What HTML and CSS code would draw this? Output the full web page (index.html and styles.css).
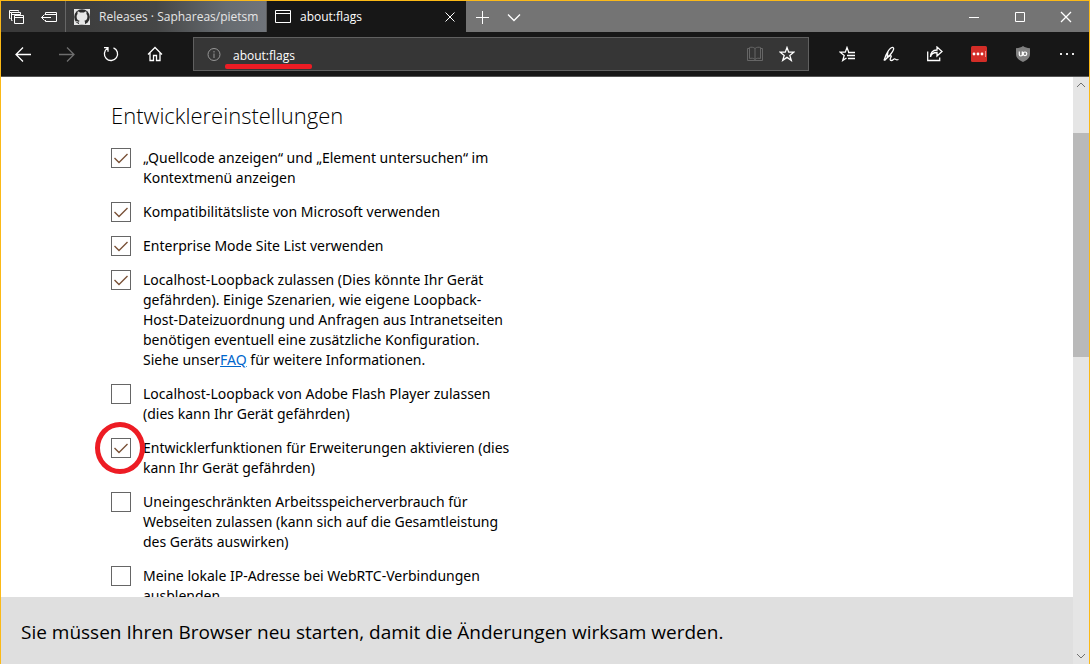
FILE: index.html
```html
<!DOCTYPE html>
<html lang="de">
<head>
<meta charset="utf-8">
<meta name="viewport" content="width=device-width, initial-scale=1">
<title>about:flags</title>
<link rel="stylesheet" href="styles.css">
</head>
<body>
<div class="window">
  <header class="tabstrip">
    <div class="tab-actions">
      <button class="strip-button" aria-label="Beiseitegelegte Tabs"><svg class="icon" viewBox="0 0 16 16"><path d="M5.500 6.500h9v8h-9zM5.500 8.500h9M3.500 11.500h-1v-8h9v2M2.500 5.500h9M1.500 9.500h-1v-8h9v1M.5 3.500h2"/></svg></button>
      <button class="strip-button" aria-label="Tabs beiseitelegen"><svg class="icon" viewBox="0 0 16 16"><path d="M4.500 6V3.500h11v9h-11V11M4.500 5.500h11M.5 8.500H10M3.500 5.500l-3 3 3 3"/></svg></button>
    </div>
    <div class="tab tab-idle">
      <svg class="icon" viewBox="0 0 16 16"><path class="fill-light" d="M0 0h16v16H0z"/><circle class="fill-dark" cx="8" cy="8" r="7.800"/><path class="fill-light" d="M5 15.500v-2c-2 .4-2.400-.9-3.200-1.400 1.500-.4 1.700 1 3.200.6.1-.5.300-.8.600-1C3.600 11.400 2.600 10 2.600 7.500c0-1 .4-1.900 1-2.500-.2-.7-.2-1.600.1-2.500 1 0 1.900.6 2.500 1h3.600c.6-.4 1.500-1 2.500-1 .3.900.3 1.800.1 2.500.6.600 1 1.500 1 2.500 0 2.500-1 3.900-3 4.200.4.400.6.900.6 1.700v2.400z"/></svg>
      <span class="tab-title">Releases · Saphareas/pietsmiet</span>
    </div>
    <div class="tab tab-active">
      <svg class="icon" viewBox="0 0 16 16"><path d="M.5 1.500h15v12H.5zM.5 4.500h15"/></svg>
      <span class="tab-title">about:flags</span>
      <button class="tab-close" aria-label="Tab schließen"><svg class="icon" viewBox="0 0 16 16"><path d="M3.500 3.500l9 9M12.500 3.500l-9 9"/></svg></button>
    </div>
    <button class="strip-button" aria-label="Neuer Tab"><svg class="icon" viewBox="0 0 16 16"><path d="M8.500 2v13M2 8.500h13"/></svg></button>
    <button class="strip-button" aria-label="Tabvorschau"><svg class="icon icon-bold" viewBox="0 0 16 16"><path d="M2 5.500l6 6 6-6"/></svg></button>
    <div class="window-controls">
      <button class="window-button" aria-label="Minimieren"><svg class="icon" viewBox="0 0 16 16"><path d="M3 8.500h10"/></svg></button>
      <button class="window-button" aria-label="Maximieren"><svg class="icon" viewBox="0 0 16 16"><path d="M3.500 3.500h9v9h-9z"/></svg></button>
      <button class="window-button" aria-label="Schließen"><svg class="icon icon-bold" viewBox="0 0 16 16"><path d="M3 3l10 10M13 3L3 13"/></svg></button>
    </div>
  </header>

  <nav class="toolbar">
    <button class="tool" aria-label="Zurück"><svg class="icon icon-bold" viewBox="0 0 16 16"><path d="M1 8.500h15M8 1.500l-7 7 7 7"/></svg></button>
    <button class="tool" aria-label="Vorwärts" disabled><svg class="icon icon-bold" viewBox="0 0 16 16"><path d="M0 8.500h15M8 1.500l7 7-7 7"/></svg></button>
    <button class="tool" aria-label="Aktualisieren"><svg class="icon icon-bold" viewBox="0 0 16 16"><path d="M4.500 2.300A6.600 6.600 0 1 0 10.500 1.800M1 1.700h4v4"/></svg></button>
    <button class="tool" aria-label="Startseite"><svg class="icon icon-bold" viewBox="0 0 16 16"><path d="M1 8.500l7-7 7 7M3 7v7.500h3.500v-5h3v5H13V7"/></svg></button>
    <div class="address">
      <svg class="icon icon-muted" viewBox="0 0 16 16"><circle cx="8" cy="8.500" r="6"/><path d="M8 7.500V12M8 5v1.500"/></svg>
      <input class="address-input" type="text" value="about:flags" aria-label="Adresse">
      <svg class="icon icon-dim" viewBox="0 0 16 16"><path d="M8 2.500C6.500 1 4 1 2.500 1.500v11c2-.5 4-.5 5.500 1 1.500-1.500 3.500-1.500 5.500-1v-11C12 1 9.500 1 8 2.500zM8 2.500v11M2.500 2.500h-2v12h15v-12h-2"/></svg>
      <button class="address-star" aria-label="Zu Favoriten hinzufügen"><svg class="icon icon-bold" viewBox="0 0 16 16"><path d="M8 1.500l1.700 4.700h5.100l-4 3.200 1.500 5L8 11.400l-4.300 3 1.500-5-4-3.200h5.100z"/></svg></button>
      <span class="underline-mark"></span>
    </div>
    <button class="tool" aria-label="Hub"><svg class="icon icon-bold" viewBox="0 0 16 16"><path d="M10 6.200H9.700L8 1.500 6.300 6.200H1.200l4 3.200-1.500 5L7.500 12M9 6.500h7M8 9.500h8M9 12.500h7"/></svg></button>
    <button class="tool" aria-label="Notizen hinzufügen"><svg class="icon icon-bold" viewBox="0 0 16 16"><path d="M1 14.500L3 9C5 5 8 1 10 1.500c2 1-1 5-3 7.500l-5.500 5.500L4 12c3-3 5-3 4-1s-1.500 3.500.5 3.500c1.500 0 2-2 3.500-1.500s1 1.500 3.500.5M3 9l3.500 1M5 5.500L4 12"/></svg></button>
    <button class="tool" aria-label="Teilen"><svg class="icon icon-bold" viewBox="0 0 16 16"><path d="M.7 5.500v9h12v-3M3.500 11c.5-3.500 3-4.500 6.500-4.500V10l5-4.500-5-4.500v3C5.500 4 3.500 6.500 3.500 11z"/></svg></button>
    <button class="tool" aria-label="LastPass"><svg class="icon" viewBox="0 0 16 16"><rect class="fill-red" width="16" height="16" rx="1.500"/><circle class="fill-white" cx="3" cy="8" r="1.400"/><circle class="fill-white" cx="7" cy="8" r="1.400"/><circle class="fill-white" cx="11" cy="8" r="1.400"/><path class="stroke-pink" d="M14.500 5v6"/></svg></button>
    <button class="tool" aria-label="uBlock Origin"><svg class="icon" viewBox="0 0 16 16"><path class="fill-shield" d="M8 0c2 1.500 4 2 7 2.200V8c0 4-3 6-7 8-4-2-7-4-7-8V2.200C4 2 6 1.500 8 0z"/><path class="shield-mark" d="M4.300 5.500v3a1.500 1.500 0 0 0 3 0v-3M7.500 5.500v4.300"/><circle class="shield-mark" cx="10" cy="7.800" r="1.800"/></svg></button>
    <button class="tool" aria-label="Mehr"><svg class="icon" viewBox="0 0 16 16"><path class="fill-light" d="M1 7h2v2H1zM7 7h2v2H7zM13 7h2v2h-2z"/></svg></button>
  </nav>

  <div class="viewport">
    <div class="page">
      <main class="content">
        <h1 class="heading">Entwicklereinstellungen</h1>
        <ul class="flags">
          <li class="flag"><input class="check" type="checkbox" id="f1" checked><label for="f1">„Quellcode anzeigen“ und „Element untersuchen“ im<br>Kontextmenü anzeigen</label></li>
          <li class="flag"><input class="check" type="checkbox" id="f2" checked><label for="f2">Kompatibilitätsliste von Microsoft verwenden</label></li>
          <li class="flag"><input class="check" type="checkbox" id="f3" checked><label for="f3">Enterprise Mode Site List verwenden</label></li>
          <li class="flag"><input class="check" type="checkbox" id="f4" checked><label for="f4">Localhost-Loopback zulassen (Dies könnte Ihr Gerät<br>gefährden). Einige Szenarien, wie eigene Loopback-<br>Host-Dateizuordnung und Anfragen aus Intranetseiten<br>benötigen eventuell eine zusätzliche Konfiguration.<br>Siehe unser<a class="link" href="#faq">FAQ</a> für weitere Informationen.</label></li>
          <li class="flag"><input class="check" type="checkbox" id="f5"><label for="f5">Localhost-Loopback von Adobe Flash Player zulassen<br>(dies kann Ihr Gerät gefährden)</label></li>
          <li class="flag"><input class="check" type="checkbox" id="f6" checked><label for="f6">Entwicklerfunktionen für Erweiterungen aktivieren (dies<br>kann Ihr Gerät gefährden)</label><span class="circle-mark"></span></li>
          <li class="flag"><input class="check" type="checkbox" id="f7"><label for="f7">Uneingeschränkten Arbeitsspeicherverbrauch für<br>Webseiten zulassen (kann sich auf die Gesamtleistung<br>des Geräts auswirken)</label></li>
          <li class="flag"><input class="check" type="checkbox" id="f8"><label for="f8">Meine lokale IP-Adresse bei WebRTC-Verbindungen<br>ausblenden</label></li>
        </ul>
      </main>
      <footer class="notice">Sie müssen Ihren Browser neu starten, damit die Änderungen wirksam werden.</footer>
    </div>
    <div class="scrollbar">
      <svg class="scroll-arrow" viewBox="0 0 16 16"><path d="M4 10l4-4 4 4"/></svg>
      <div class="track"><div class="thumb"></div></div>
      <svg class="scroll-arrow" viewBox="0 0 16 16"><path d="M4 6l4 4 4-4"/></svg>
    </div>
  </div>
</div>
</body>
</html>
```

FILE: styles.css
```css
* { box-sizing: border-box; }

body {
  margin: 0;
  font-family: "Noto Sans", "Open Sans", sans-serif;
  font-size: 14px;
  line-height: 20px;
  color: #000;
}

button {
  display: flex;
  align-items: center;
  justify-content: center;
  flex: none;
  padding: 0;
  border: 0;
  background: none;
  color: #fff;
}

.window {
  display: flex;
  flex-direction: column;
  height: 100vh;
  border: 1px solid #fbb917;
  border-bottom: 0;
  background: #fff;
}

.icon {
  display: block;
  flex: none;
  width: 16px;
  height: 16px;
  fill: none;
  stroke: currentColor;
  stroke-width: 1;
}
.icon-bold { stroke-width: 1.3; }
.icon-muted { color: #969696; }
.icon-dim { color: #666; }
.fill-light { fill: #e6e6e6; stroke: none; }
.fill-dark { fill: #2c2c2c; stroke: none; }
.fill-white { fill: #fff; stroke: none; }
.fill-red { fill: #d32d27; stroke: none; }
.fill-shield { fill: #808080; stroke: none; }
.stroke-pink { stroke: #ec8d89; }
.shield-mark { stroke: #fff; stroke-width: 1.2; }

/* Tab strip */
.tabstrip {
  display: flex;
  flex: none;
  height: 31px;
  background: #747474;
}
.tab-actions {
  display: flex;
  background: #3a3a3a;
  border-right: 1px solid #666;
}
.strip-button { width: 32px; }
.tab {
  display: flex;
  align-items: center;
  flex: 0 1 199px;
  min-width: 0;
  padding: 0 8px;
  gap: 9px;
  color: #fff;
  font-family: "Open Sans", "Noto Sans", sans-serif;
  font-size: 12px;
}
.tab-idle {
  flex-basis: 201px;
  border-right: 1px solid #5c5c5c;
  background: linear-gradient(90deg, #3c3c3c 0%, #454646 45%, #666b70 80%, #70747a 100%);
  color: #e6e6e6;
}
.tab-active { background: #171717; }
.tab-title {
  flex: 1;
  overflow: hidden;
  white-space: nowrap;
}
.window-controls {
  display: flex;
  margin-left: auto;
}
.window-button { width: 46px; }

/* Toolbar */
.toolbar {
  display: flex;
  align-items: center;
  flex: none;
  height: 45px;
  border-bottom: 1px solid #555;
  background: #171717;
}
.tool {
  width: 44px;
  height: 44px;
}
.tool:disabled { color: #6e6e6e; }
.address {
  position: relative;
  display: flex;
  align-items: center;
  flex: 1;
  gap: 16px;
  height: 34px;
  margin: 0 16px;
  padding: 0 13px 0 12px;
  border: 1px solid #606060;
  background: #363636;
}
.address-input {
  flex: 1;
  min-width: 0;
  margin-left: -5px;
  padding: 2px 0 0;
  border: 0;
  outline: 0;
  background: none;
  color: #fff;
  font-family: "Open Sans", "Noto Sans", sans-serif;
  font-size: 12px;
}
.underline-mark {
  position: absolute;
  left: 31px;
  top: 26px;
  width: 87px;
  height: 5px;
  border-radius: 2px;
  background: #ed1c24;
}

/* Page */
.viewport {
  display: flex;
  flex: 1;
  min-height: 0;
}
.page {
  display: flex;
  flex-direction: column;
  flex: 1;
  min-width: 0;
}
.content {
  flex: 1;
  min-height: 0;
  overflow: hidden;
  padding: 22px 16px 0 110px;
}
.heading {
  margin: 0 0 17px;
  font-family: "Open Sans", "Noto Sans", sans-serif;
  font-size: 22px;
  font-weight: 300;
  line-height: 32px;
}
.flags {
  display: flex;
  flex-direction: column;
  gap: 14px;
  margin: 0;
  padding: 0;
  list-style: none;
}
.flag {
  position: relative;
  display: flex;
  align-items: flex-start;
  gap: 12px;
}
.check {
  appearance: none;
  flex: none;
  width: 20px;
  height: 20px;
  margin: 0;
  border: 1px solid #666;
  background: #fff;
}
.check:checked {
  background: #fff url("data:image/svg+xml,%3Csvg xmlns='http://www.w3.org/2000/svg' viewBox='0 0 18 18'%3E%3Cpath d='M2.500 9l4.500 4.500 8.500-8.500' fill='none' stroke='%237a5238' stroke-width='1.400'/%3E%3C/svg%3E") center / 18px 18px no-repeat;
}
.link { color: #0066cc; }
.circle-mark {
  position: absolute;
  left: -16px;
  top: -16px;
  width: 50px;
  height: 52px;
  border: 5px solid #ed1c24;
  border-radius: 50%;
  pointer-events: none;
}
.notice {
  flex: none;
  padding: 23px 20px 20px;
  background: #dfdfdf;
  font-family: "Open Sans", "Noto Sans", sans-serif;
  font-size: 19px;
  line-height: 24px;
}

/* Scrollbar */
.scrollbar {
  display: flex;
  flex-direction: column;
  flex: none;
  width: 16px;
  background: #e5e5e5;
}
.scroll-arrow {
  flex: none;
  width: 16px;
  height: 16px;
  fill: none;
  stroke: #707070;
}
.track {
  flex: 1;
  padding-top: 40px;
}
.thumb {
  height: 43.5%;
  background: #b9b9b9;
}
```
